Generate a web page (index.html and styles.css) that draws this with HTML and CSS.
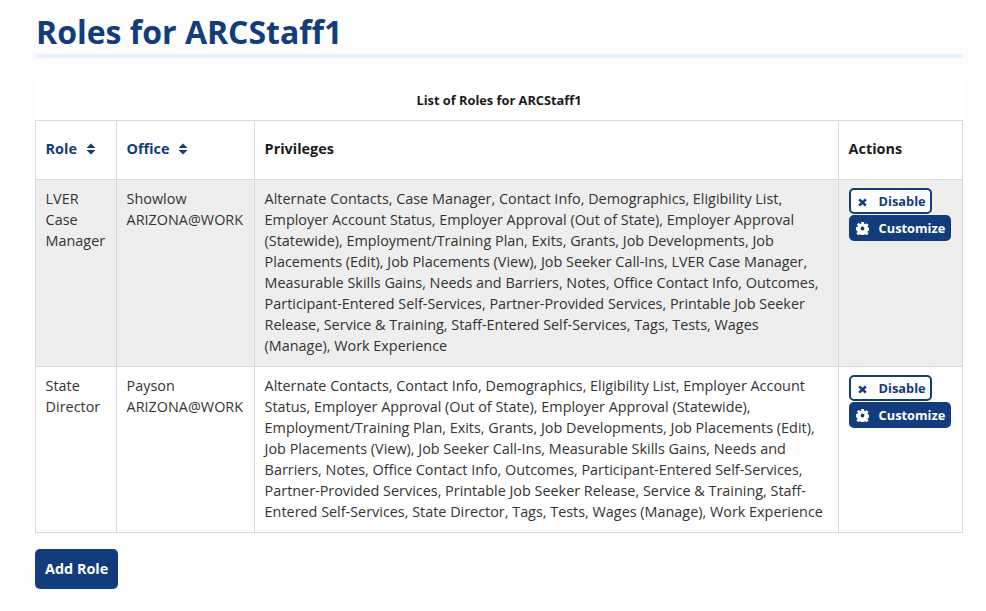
FILE: index.html
```html
<!DOCTYPE html>
<html>
	<head>
		<title>Roles for ARCStaff1</title>
		<link rel="stylesheet" href="styles.css">
	</head>
	<body>
		<h1 class="titulo">Roles for ARCStaff1</h1>

		<table class="roles">
			<caption>List of Roles for ARCStaff1</caption>
			<colgroup>
				<col class="col_role">
				<col class="col_office">
				<col class="col_priv">
				<col class="col_actions">
			</colgroup>
			<thead>
				<tr>
					<th><a class="orden" href="#">Role <svg class="flechas" viewBox="0 0 10 12"><path d="M5 0.5 9.5 5H0.5zM5 11.5 0.5 7h9z"/></svg></a></th>
					<th><a class="orden" href="#">Office <svg class="flechas" viewBox="0 0 10 12"><path d="M5 0.5 9.5 5H0.5zM5 11.5 0.5 7h9z"/></svg></a></th>
					<th>Privileges</th>
					<th>Actions</th>
				</tr>
			</thead>
			<tbody>
				<tr class="gris">
					<td>LVER Case Manager</td>
					<td>Showlow ARIZONA@WORK</td>
					<td>Alternate Contacts, Case Manager, Contact Info, Demographics, Eligibility List, Employer Account Status, Employer Approval (Out of State), Employer Approval (Statewide), Employment/Training Plan, Exits, Grants, Job Developments, Job Placements (Edit), Job Placements (View), Job Seeker Call-Ins, LVER Case Manager, Measurable Skills Gains, Needs and Barriers, Notes, Office Contact Info, Outcomes, Participant-Entered Self-Services, Partner-Provided Services, Printable Job Seeker Release, Service &amp; Training, Staff-Entered Self-Services, Tags, Tests, Wages (Manage), Work Experience</td>
					<td>
						<a class="boton boton_linea" href="#"><svg class="icono" viewBox="0 0 10 10"><path d="M2.2.6 5 3.1 7.8.6 9.7 2.4 7.1 5l2.6 2.6-1.9 1.8L5 6.9 2.2 9.4.3 7.6 2.9 5 .3 2.4z"/></svg>Disable</a>
						<a class="boton" href="#"><svg class="icono" viewBox="0 0 24 24"><path fill-rule="evenodd" d="M9.5 0h5l.6 3.4 1.7.7 2.9-2 3.5 3.5-2 2.9.7 1.7 3.4.6v5l-3.4.6-.7 1.7 2 2.9-3.5 3.5-2.9-2-1.7.7-.6 3.4h-5l-.6-3.4-1.7-.7-2.9 2-3.500-3.500 2-2.900-.7-1.700L-.4 14.500v-5l3.400-.6.7-1.700-2-2.900L5.200 1.800l2.900 2 1.700-.7zM12 8.500a3.500 3.500 0 1 0 0 7 3.500 3.500 0 0 0 0-7z"/></svg>Customize</a>
					</td>
				</tr>
				<tr>
					<td>State Director</td>
					<td>Payson ARIZONA@WORK</td>
					<td>Alternate Contacts, Contact Info, Demographics, Eligibility List, Employer Account Status, Employer Approval (Out of State), Employer Approval (Statewide), Employment/Training Plan, Exits, Grants, Job Developments, Job Placements (Edit), Job Placements (View), Job Seeker Call-Ins, Measurable Skills Gains, Needs and Barriers, Notes, Office Contact Info, Outcomes, Participant-Entered Self-Services, Partner-Provided Services, Printable Job Seeker Release, Service &amp; Training, Staff-Entered Self-Services, State Director, Tags, Tests, Wages (Manage), Work Experience</td>
					<td>
						<a class="boton boton_linea" href="#"><svg class="icono" viewBox="0 0 10 10"><path d="M2.2.6 5 3.1 7.8.6 9.7 2.4 7.1 5l2.6 2.6-1.9 1.8L5 6.9 2.2 9.4.3 7.6 2.9 5 .3 2.4z"/></svg>Disable</a>
						<a class="boton" href="#"><svg class="icono" viewBox="0 0 24 24"><path fill-rule="evenodd" d="M9.5 0h5l.6 3.4 1.7.7 2.9-2 3.5 3.5-2 2.9.7 1.7 3.4.6v5l-3.4.6-.7 1.7 2 2.9-3.5 3.5-2.9-2-1.7.7-.6 3.4h-5l-.6-3.4-1.7-.7-2.9 2-3.500-3.500 2-2.900-.7-1.700L-.4 14.500v-5l3.400-.6.7-1.700-2-2.900L5.200 1.800l2.900 2 1.700-.7zM12 8.500a3.500 3.500 0 1 0 0 7 3.500 3.500 0 0 0 0-7z"/></svg>Customize</a>
					</td>
				</tr>
			</tbody>
		</table>

		<a class="agregar" href="#">Add Role</a>
	</body>
</html>
```

FILE: styles.css
```css
body
{
	margin: 0;
	padding: 0 23px 0 35px;
	background-color: #fdfdfd;
	color: #333;
	font-family: "Open Sans", "DejaVu Sans", sans-serif;
	font-size: 14.4px;
	line-height: 21px;
}

.titulo
{
	margin: 0 0 0 1px;
	padding-top: 10px;
	height: 44px;
	border-bottom: 4px solid #e7f0fb;
	color: #133c7c;
	font-size: 32px;
	line-height: 43px;
	font-weight: 700;
}

.roles
{
	margin-top: 23px;
	width: 927px;
	table-layout: fixed;
	border-collapse: collapse;
	background-color: #fff;
}

.roles caption
{
	height: 39px;
	padding-top: 9px;
	box-sizing: border-box;
	background-color: #fff;
	color: #1b1b1b;
	font-size: 12.8px;
	line-height: 20px;
	font-weight: 700;
}

.col_role { width: 81px; }
.col_office { width: 138px; }
.col_priv { width: 584px; }
.col_actions { width: 124px; }

.roles th, .roles td
{
	border: 1px solid #d9d9d9;
	padding: 8px 13px 10px 9.6px;
	text-align: left;
	vertical-align: top;
}

.roles th
{
	padding: 17px 9px 20px 9.6px;
	color: #1b1b1b;
	font-weight: 700;
}

.gris td
{
	background-color: #eee;
}

.orden
{
	color: #133c7c;
	text-decoration: none;
}

.flechas
{
	width: 10px;
	height: 12px;
	margin-left: 5px;
	vertical-align: -1px;
	fill: #133c7c;
}

.boton
{
	display: block;
	width: fit-content;
	box-sizing: border-box;
	height: 26px;
	margin-bottom: 1px;
	padding: 0 4px 0 5px;
	border: 2px solid #133c7c;
	border-radius: 5px;
	background-color: #133c7c;
	color: #fff;
	font-size: 12.8px;
	line-height: 23px;
	font-weight: 700;
	text-decoration: none;
	white-space: nowrap;
}

.boton_linea
{
	background-color: #fff;
	color: #133c7c;
}

.icono
{
	width: 13px;
	height: 13px;
	margin-right: 10px;
	vertical-align: -2px;
	fill: currentColor;
}

.boton_linea .icono
{
	width: 9px;
	height: 9px;
	margin-left: 2px;
	margin-right: 12px;
	vertical-align: -1px;
}

.agregar
{
	display: inline-block;
	margin-top: 16px;
	padding: 9px 10px 10px;
	border-radius: 5px;
	background-color: #133c7c;
	color: #fff;
	font-weight: 700;
	text-decoration: none;
}
```
